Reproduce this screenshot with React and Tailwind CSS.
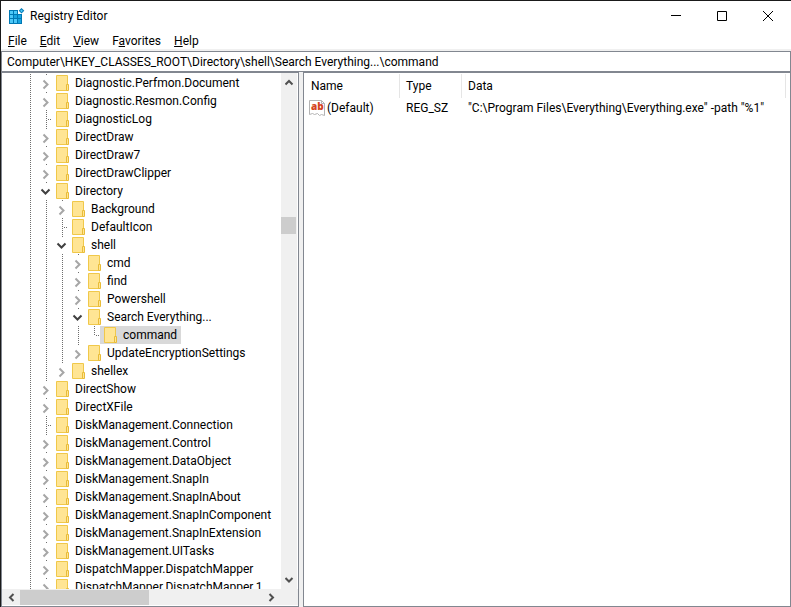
import { useState } from 'react'

const keys = [
  { id: 1, name: 'Diagnostic.Perfmon.Document', level: 0, state: 'closed' },
  { id: 2, name: 'Diagnostic.Resmon.Config', level: 0, state: 'closed' },
  { id: 3, name: 'DiagnosticLog', level: 0, state: 'leaf' },
  { id: 4, name: 'DirectDraw', level: 0, state: 'closed' },
  { id: 5, name: 'DirectDraw7', level: 0, state: 'closed' },
  { id: 6, name: 'DirectDrawClipper', level: 0, state: 'closed' },
  { id: 7, name: 'Directory', level: 0, state: 'open' },
  { id: 8, name: 'Background', level: 1, state: 'closed' },
  { id: 9, name: 'DefaultIcon', level: 1, state: 'leaf' },
  { id: 10, name: 'shell', level: 1, state: 'open' },
  { id: 11, name: 'cmd', level: 2, state: 'closed' },
  { id: 12, name: 'find', level: 2, state: 'closed' },
  { id: 13, name: 'Powershell', level: 2, state: 'closed' },
  { id: 14, name: 'Search Everything...', level: 2, state: 'open' },
  { id: 15, name: 'command', level: 3, state: 'leaf', last: true },
  { id: 16, name: 'UpdateEncryptionSettings', level: 2, state: 'closed' },
  { id: 17, name: 'shellex', level: 1, state: 'closed' },
  { id: 18, name: 'DirectShow', level: 0, state: 'closed' },
  { id: 19, name: 'DirectXFile', level: 0, state: 'closed' },
  { id: 20, name: 'DiskManagement.Connection', level: 0, state: 'leaf' },
  { id: 21, name: 'DiskManagement.Control', level: 0, state: 'closed' },
  { id: 22, name: 'DiskManagement.DataObject', level: 0, state: 'closed' },
  { id: 23, name: 'DiskManagement.SnapIn', level: 0, state: 'closed' },
  { id: 24, name: 'DiskManagement.SnapInAbout', level: 0, state: 'closed' },
  { id: 25, name: 'DiskManagement.SnapInComponent', level: 0, state: 'closed' },
  { id: 26, name: 'DiskManagement.SnapInExtension', level: 0, state: 'closed' },
  { id: 27, name: 'DiskManagement.UITasks', level: 0, state: 'closed' },
  { id: 28, name: 'DispatchMapper.DispatchMapper', level: 0, state: 'closed' },
  { id: 29, name: 'DispatchMapper.DispatchMapper.1', level: 0, state: 'closed' },
]

// [before, access key, after]
const menus = [
  ['', 'F', 'ile'],
  ['', 'E', 'dit'],
  ['', 'V', 'iew'],
  ['F', 'a', 'vorites'],
  ['', 'H', 'elp'],
]

const RegistryIcon = () => (
  <svg width="16" height="16" viewBox="0 0 16 16" className="shrink-0">
    <path d="M0 2h9v4h4v10H0z" fill="#0078b4" />
    <path d="M1 3h3v3H1zM5 3h3v3H5zM1 7h3v3H1zM1 11h3v4H1zM5 11h3v4H5z" fill="#4cc8f8" />
    <path d="M5 7h3v3H5zM9 7h3v3H9zM9 11h3v4H9z" fill="#18a4e0" />
    <path d="M12.5 0l2.8 2.8-2.8 2.8-2.8-2.8z" fill="#0078b4" />
    <path d="M12.5 1.4l1.4 1.4-1.4 1.4-1.4-1.4z" fill="#4cc8f8" />
  </svg>
)

const FolderIcon = () => (
  <svg width="13" height="16" viewBox="0 0 13 16" className="shrink-0">
    <path d="M.5.5h11v15H.5z" fill="#ffe594" stroke="#f0c84a" />
    <path d="M10.5 9.5h2v6h-2z" fill="#ffe594" stroke="#e9bc38" />
  </svg>
)

const StringIcon = () => (
  <svg width="16" height="16" viewBox="0 0 16 16" className="shrink-0">
    <path d="M.5.5h12l3 3v12l-3-1-2 1-2-2-3 1-2-1-3 1z" fill="#fff" stroke="#b4b4b4" />
    <path d="M12.5.5v3h3" fill="none" stroke="#b4b4b4" />
    <text x="2" y="10" fontSize="10" fontWeight="800" fontFamily="Open Sans, sans-serif" fill="#d4451f">ab</text>
  </svg>
)

// dotted guide for an ancestor level
const Guide = () => (
  <svg width="16" height="18" className="shrink-0">
    <path d="M8.5 0v18" stroke="#6e6e6e" strokeDasharray="1 1" />
  </svg>
)

const Expander = ({ state, last }) => (
  <svg width="14" height="18" viewBox="0 0 14 18" fill="none" className="shrink-0">
    {state === 'leaf' && (
      <>
        <path d={last ? 'M8.5 0v10' : 'M8.5 0v18'} stroke="#6e6e6e" strokeDasharray="1 1" />
        <path d="M10 9.5h4" stroke="#6e6e6e" strokeDasharray="1 1" />
      </>
    )}
    {state !== 'leaf' && <path d="M8.5 0v1" stroke="#6e6e6e" />}
    {state === 'closed' && <path d="M5.5 6.5l4 4-4 4" stroke="#a6a6a6" strokeWidth="2" />}
    {state === 'open' && <path d="M3.5 7.5l4 4 4-4" stroke="#404040" strokeWidth="2" />}
  </svg>
)

const Arrow = ({ d }) => (
  <svg width="9" height="9" viewBox="0 0 9 9" fill="none" className="shrink-0">
    <path d={d} stroke="#505050" strokeWidth="2" />
  </svg>
)

const TreeRow = ({ item, selected, onSelect }) => (
  <li className="flex h-[18px] items-center">
    <Guide />
    {Array.from({ length: item.level }, (_, i) => (
      <Guide key={i} />
    ))}
    <Expander state={item.state} last={item.last} />
    <button
      type="button"
      onClick={() => onSelect(item.id)}
      className={`flex h-[18px] items-center gap-[6px] px-1 whitespace-nowrap ${selected ? 'bg-[#d9d9d9]' : ''}`}
    >
      <FolderIcon />
      {item.name}
    </button>
  </li>
)

const App = () => {
  const [selected, setSelected] = useState(15)
  const [path, setPath] = useState('Computer\\HKEY_CLASSES_ROOT\\Directory\\shell\\Search Everything...\\command')

  return (
    <div className="flex h-screen flex-col border-t border-l border-[#1a1a1a] bg-white font-['Roboto','Open_Sans',sans-serif] text-[12px] leading-[18px] text-black">
      <header className="flex h-[30px] items-center justify-between pl-2">
        <div className="flex items-center gap-[5px]">
          <RegistryIcon />
          <h1>Registry Editor</h1>
        </div>
        <div className="flex">
          <button type="button" aria-label="Minimize" className="flex h-[30px] w-[46px] items-center justify-center">
            <svg width="10" height="10"><path d="M0 4.5h10" stroke="#000" /></svg>
          </button>
          <button type="button" aria-label="Maximize" className="flex h-[30px] w-[46px] items-center justify-center">
            <svg width="10" height="10" fill="none"><path d="M.5.5h9v9h-9z" stroke="#000" /></svg>
          </button>
          <button type="button" aria-label="Close" className="flex h-[30px] w-[46px] items-center justify-center">
            <svg width="10" height="10"><path d="M0 0l10 10M10 0L0 10" stroke="#000" /></svg>
          </button>
        </div>
      </header>

      <nav className="flex h-[18px] items-center gap-[13px] pt-[2px] pl-[7px]">
        {menus.map(([before, key, after]) => (
          <button key={key} type="button">
            {before}<span className="underline">{key}</span>{after}
          </button>
        ))}
      </nav>

      <div className="bg-[#f0f0f0] pt-[2px]">
        <input
          aria-label="Address"
          value={path}
          onChange={(e) => setPath(e.target.value)}
          className="block h-[21px] w-full border border-[#828790] bg-white px-[5px] outline-none"
        />
      </div>

      <main className="flex min-h-0 flex-1 bg-[#f0f0f0]">
        <section className="flex w-[298px] shrink-0 flex-col border border-[#828790] bg-white">
          <div className="flex min-h-0 flex-1">
            <ul className="min-w-0 flex-1 overflow-hidden pt-px pl-5">
              {keys.map((item) => (
                <TreeRow key={item.id} item={item} selected={item.id === selected} onSelect={setSelected} />
              ))}
            </ul>
            <div className="mr-px flex w-4 flex-col items-center justify-between bg-[#f0f0f0] py-[5px]">
              <Arrow d="M.5 6.5l3.5-3.5 3.5 3.5" />
              <div className="flex w-full flex-1 flex-col pt-[130px]">
                <div className="mr-px h-[17px] bg-[#cdcdcd]" />
              </div>
              <Arrow d="M.5 3l3.5 3.5 3.500-3.500" />
            </div>
          </div>
          <div className="mb-px flex h-4 items-center bg-[#f0f0f0] pr-[22px] pl-[5px]">
            <Arrow d="M6.5 1L3 4.5 6.5 8" />
            <div className="h-[15px] flex-1 pl-1">
              <div className="h-full w-[129px] bg-[#cdcdcd]" />
            </div>
            <Arrow d="M2.5 1L6 4.5 2.5 8" />
          </div>
        </section>

        <section className="ml-1 min-w-0 flex-1 border border-[#828790] bg-white pt-px pr-1">
          <table className="w-full table-fixed border-separate border-spacing-0 text-left">
            <thead>
              <tr className="h-6">
                <th className="w-24 border-r border-[#e5e5e5] p-0 pl-[7px] font-normal">Name</th>
                <th className="w-[62px] border-r border-[#e5e5e5] p-0 pl-[6px] font-normal">Type</th>
                <th className="border-r border-[#e5e5e5] p-0 pl-[6px] font-normal">Data</th>
              </tr>
            </thead>
            <tbody>
              <tr className="h-5 whitespace-nowrap">
                <td className="p-0 pl-[5px]">
                  <div className="flex items-center gap-[2px]">
                    <StringIcon />
                    (Default)
                  </div>
                </td>
                <td className="p-0 pl-[6px]">REG_SZ</td>
                <td className="p-0 pl-[6px]">"C:\Program Files\Everything\Everything.exe" -path "%1"</td>
              </tr>
            </tbody>
          </table>
        </section>
      </main>
    </div>
  )
}

export default App
